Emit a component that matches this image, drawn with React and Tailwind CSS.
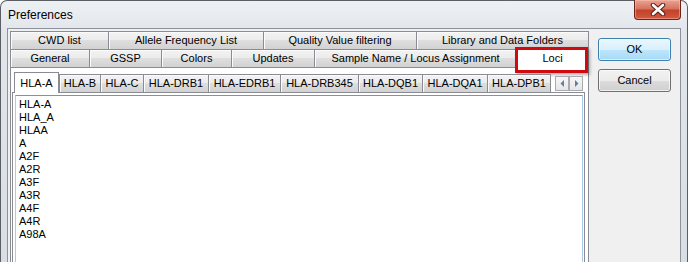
const row1 = [
  { label: "CWD list", w: "w-[98px]" },
  { label: "Allele Frequency List", w: "w-[155px]" },
  { label: "Quality Value filtering", w: "w-[153px]" },
  { label: "Library and Data Folders", w: "w-[173px] border-r" },
];
const row2 = [
  { label: "General", w: "w-[79px]" },
  { label: "GSSP", w: "w-[72px]" },
  { label: "Colors", w: "w-[70px]" },
  { label: "Updates", w: "w-[83px]" },
  { label: "Sample Name / Locus Assignment", w: "w-[202px]" },
];
const inner = [
  { label: "HLA-B", w: "w-[41px]" },
  { label: "HLA-C", w: "w-[43px]" },
  { label: "HLA-DRB1", w: "w-[65px]" },
  { label: "HLA-EDRB1", w: "w-[72px]" },
  { label: "HLA-DRB345", w: "w-[78px]" },
  { label: "HLA-DQB1", w: "w-[64px]" },
  { label: "HLA-DQA1", w: "w-[65px]" },
  { label: "HLA-DPB1", w: "w-[64px] border-r" },
];
const items = ["HLA-A", "HLA_A", "HLAA", "A", "A2F", "A2R", "A3F", "A3R", "A4F", "A4R", "A98A"];

const tabCls =
  "h-[18px] flex items-center justify-center border-t border-l border-[#898c95] bg-[linear-gradient(#f3f3f3,#ebebeb_50%,#dedede_50%,#d2d2d2)] shadow-[inset_1px_1px_0_#fbfbfb] text-[11px] leading-none whitespace-nowrap";

function Arrow({ dir }) {
  return (
    <div className="w-[14px] h-[15px] border border-[#a9abb0] bg-[linear-gradient(#f7f7f7,#e6e6e6)] flex items-center justify-center">
      <svg width="5" height="7" viewBox="0 0 5 7">
        {dir === "left" ? (
          <polygon points="4,0 4,7 0.5,3.5" fill="#5d7fb0" />
        ) : (
          <polygon points="1,0 1,7 4.5,3.5" fill="#5d7fb0" />
        )}
      </svg>
    </div>
  );
}

export default function App() {
  return (
    <div className="w-[688px] h-[262px] overflow-hidden bg-white font-['Liberation_Sans',Arial,sans-serif] text-black">
      <div className="h-[262px] flex flex-col border-t border-l border-r border-[#5a5f66] rounded-t-[7px] bg-[linear-gradient(180deg,#eef1f4,#e2e6eb_30px,#d9dee4)]">
        {/* Title bar */}
        <div className="h-[27px] flex items-start justify-between shrink-0">
          <div className="pl-[7px] mt-[6px] text-[12px] leading-[16px]">Preferences</div>
          <div className="mr-[6px] -mt-px w-[47px] h-[20px] rounded-b-[4px] border border-t-0 border-[#6b2318] bg-[linear-gradient(#eaa392,#d7745f_45%,#c1432b_55%,#d35a3c)] shadow-[inset_0_0_0_1px_rgba(255,200,190,0.45)] flex items-center justify-center">
            <svg width="16" height="13" viewBox="0 0 16 13">
              <path d="M3 2 L13 11 M13 2 L3 11" stroke="#5a1f16" strokeWidth="4.6" strokeLinecap="round" />
              <path d="M3 2 L13 11 M13 2 L3 11" stroke="#ffffff" strokeWidth="2.6" strokeLinecap="round" />
            </svg>
          </div>
        </div>
        {/* Client area */}
        <div className="flex-1 mx-[6px] border-t border-l border-r border-[#8c939c] bg-[#f0f0f0] flex items-start min-h-0">
          {/* Outer tab control */}
          <div className="ml-[2px] mt-[2px] w-[579px] h-[260px] flex flex-col">
            <div className="flex h-[18px]">
              {row1.map((t) => (
                <div key={t.label} className={`${tabCls} ${t.w}`}>{t.label}</div>
              ))}
            </div>
            <div className="flex h-[18px] items-end relative z-10">
              {row2.map((t) => (
                <div key={t.label} className={`${tabCls} ${t.w}`}>{t.label}</div>
              ))}
              <div className="w-[73px] h-[21px] translate-y-px border-t border-l border-r border-[#898c95] bg-white flex items-center justify-center text-[11px] leading-none">
                Loci
              </div>
              <div className="absolute left-[505px] top-[-2px] w-[73px] h-[26px] border-[3px] border-[#d10a10] shadow-[2px_2px_3px_rgba(0,0,0,0.3)] pointer-events-none" />
            </div>
            {/* Outer panel */}
            <div className="flex-1 border border-[#898c95] bg-white pl-[1px] pr-[3px] pt-[6px] flex flex-col">
              <div className="flex h-[18px] items-end pl-[2px] pr-[2px] relative z-10">
                <div className="w-[45px] h-[21px] translate-y-px border-t border-l border-r border-[#898c95] bg-white flex items-center justify-center text-[11px] leading-none">
                  HLA-A
                </div>
                {inner.map((t) => (
                  <div key={t.label} className={`${tabCls} ${t.w}`}>{t.label}</div>
                ))}
                <div className="ml-auto mb-[1px] flex">
                  <Arrow dir="left" />
                  <Arrow dir="right" />
                </div>
              </div>
              <div className="flex-1 border border-[#898c95] bg-white pl-[2px] pt-[2px] pr-[1px] flex flex-col">
                <div className="flex-1 border border-[#a9cbe8] border-t-[#569de5] bg-white pl-[3px] pt-[2px]">
                  {items.map((it) => (
                    <div key={it} className="text-[11px] leading-[13px] h-[13px]">{it}</div>
                  ))}
                </div>
              </div>
            </div>
          </div>
          {/* Buttons */}
          <div className="ml-[9px] mt-[9px] flex flex-col gap-[8px]">
            <div className="w-[73px] h-[23px] rounded-[3px] border border-[#3c7fb1] bg-[linear-gradient(#eaf6fd,#d9f0fc_50%,#bee6fd_50%,#a7d9f5)] shadow-[inset_0_0_0_1px_rgba(255,255,255,0.6)] flex items-center justify-center text-[11px] leading-none">
              OK
            </div>
            <div className="w-[73px] h-[23px] rounded-[3px] border border-[#707070] bg-[linear-gradient(#f2f2f2,#ebebeb_50%,#dddddd_50%,#cfcfcf)] shadow-[inset_0_0_0_1px_rgba(255,255,255,0.7)] flex items-center justify-center text-[11px] leading-none">
              Cancel
            </div>
          </div>
        </div>
      </div>
    </div>
  );
}
